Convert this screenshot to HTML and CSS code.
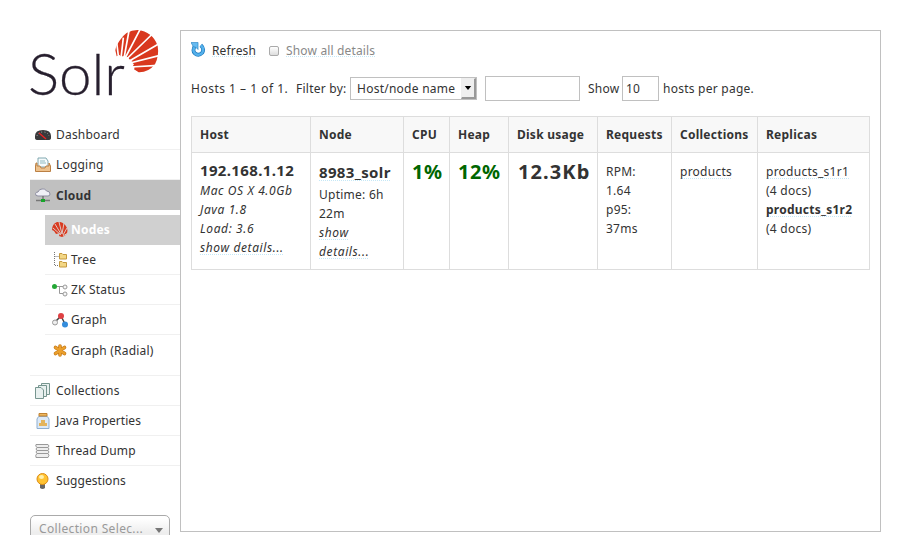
FILE: index.html
```
<!DOCTYPE html>
<html lang="en">
<head>
<meta charset="utf-8">
<title>Solr Admin</title>
<link rel="stylesheet" href="styles.css">
</head>
<body>
<div class="page">
<aside class="sidebar">
<svg class="logo" width="130" height="90" viewBox="0 0 130 90">
<g transform="translate(80 -5) scale(.3333)">
<path fill="#d9381e" d="M20 94 16 76Q17 62 28 48Q48 15 82 15Q128 20 143 62Q148 92 135 118Q115 143 86 142L72 133 74 128 69 122 72 118 64 111 68 107 58 103 54 96 44 97 40 92 34 96 29 90Z"/>
<path stroke="#fff" stroke-width="5" d="M26 100 20 52M33 100 40 38M42 100 58 12M44 102 90 14M50 102 124 30M58 108 147 56M60 114 147 92M62 126 144 121"/>
</g>
<text class="logo-text" x="-2" y="65" textLength="97" lengthAdjust="spacingAndGlyphs">Solr</text>
</svg>
<nav class="menu">
<a class="item"><svg class="icon" viewBox="0 0 16 16"><path d="M0 9Q0 3 8 3T16 9V11Q16 13 13 13H3Q0 13 0 11Z" fill="#39393b"/><path d="M2 9Q3 5 8 5T14 9" fill="none" stroke="#aaa" stroke-dasharray="1 2"/><path d="M4 6 11 12" stroke="#e22" stroke-width="1.300"/></svg><span>Dashboard</span></a>
<a class="item"><svg class="icon" viewBox="0 0 16 16"><path d="M3 1H11L13 4V10H3Z" fill="#f6fbfc" stroke="#80a8b0"/><path d="M5 4H10M5 6H11" stroke="#8fbac0"/><path d="M1 6 0.500 9V14.500H15.500V9L14 6V9H11L10 11H6L5 9H2V6Z" fill="#eec28d" stroke="#bb8044"/></svg><span>Logging</span></a>
<a class="item active"><svg class="icon" viewBox="0 0 16 16"><path d="M3 9Q0 9 .6 6.500 1 5 3 5 4 2 7 2 10 1 11.500 4 15 4 15 7 15 9 13 9Z" fill="#f0f0f6" stroke="#8d8da0"/><path d="M8 9V12M1 13.500H15" stroke="#777" stroke-width="1.500"/><path d="M6 12H10V15H6Z" fill="#16a52a"/></svg><span>Cloud</span></a>
<div class="submenu">
<a class="item current"><svg class="icon" viewBox="0 0 16 16"><path d="M0 8Q0 2 5 0 12-1 15 6 17 13 10 15L7 14 8 11 4 12 2 9Z" fill="#d93b20"/><path d="M9 13 1 6M9 12 3 2M10 12 7 0M10 12 12 1M11 13 15 6M11 14 16 11" stroke="#dcc8c4"/></svg><span>Nodes</span></a>
<a class="item"><svg class="icon" viewBox="0 0 16 16"><path d="M2.500 0V13.500H7M2.500 4.500H7" fill="none" stroke="#777" stroke-dasharray="1 1"/><path d="M7.500 1.500H10L11 2.500H14.500V7H7.500ZM7.500 9.500H10L11 10.500H14.500V15H7.500Z" fill="#f3d785" stroke="#c59a40"/></svg><span>Tree</span></a>
<a class="item"><svg class="icon" viewBox="0 0 16 16"><path d="M5 4.500H11M7.500 4.500V11.500H11" fill="none" stroke="#999"/><circle cx="2.500" cy="4.500" r="2.500" fill="#23a735"/><circle cx="13" cy="5" r="2" fill="#f6f6f6" stroke="#999"/><circle cx="13" cy="12" r="2" fill="#f6f6f6" stroke="#999"/></svg><span>ZK Status</span></a>
<a class="item"><svg class="icon" viewBox="0 0 16 16"><path d="M3 10 9 4 13 12" fill="none" stroke="#444" stroke-width="1.500"/><circle cx="9" cy="4" r="3" fill="#df4144"/><circle cx="3" cy="10.500" r="2.500" fill="#eee" stroke="#999"/><circle cx="13" cy="12.500" r="3" fill="#348ddc"/></svg><span>Graph</span></a>
<a class="item"><svg class="icon" viewBox="0 0 16 16"><path d="M8 3V12M3.500 4.500 12.500 10.500M12.500 4.500 3.500 10.500" stroke="#c67a1a" stroke-width="3.600" stroke-linecap="round"/><path d="M8 3V12M3.500 4.500 12.500 10.500M12.500 4.500 3.500 10.500" stroke="#eba02d" stroke-width="2.200" stroke-linecap="round"/></svg><span>Graph (Radial)</span></a>
</div>
<a class="item"><svg class="icon" viewBox="0 0 16 16"><g fill="#e8f0ef" stroke="#76958f"><path d="M6.500.5H14.500V11.500H6.500Z"/><path d="M3.500 2.500H11.500V13.500H3.500Z"/><path d="M.5 4.500H6L8.500 7V15.500H.5Z"/></g></svg><span>Collections</span></a>
<a class="item"><svg class="icon" viewBox="0 0 16 16"><path d="M3.500 3.500H12.500L14 6V15.500H2V6Z" fill="#dce9f7" stroke="#8eafd0"/><path d="M4 .5H12V3H4Z" fill="#ecb65d" stroke="#c08232"/><path d="M4 13V10H6V7H10V10H12V13Z" fill="#e3b45c"/></svg><span class="tight">Java Properties</span></a>
<a class="item"><svg class="icon" viewBox="0 0 16 16"><path d="M1 1.500H13Q15 3 13 4.500H2Q0 3 1 1.500M2 4.500H13Q15 6 13 7.500H2Q0 6 2 4.500M2 7.500H13Q15 9 13 10.500H2Q0 9 2 7.500M2 10.500H13Q15 12 13 14.500H1Q0 12 2 10.500" fill="#eee" stroke="#999"/></svg><span>Thread Dump</span></a>
<a class="item last"><svg class="icon" viewBox="0 0 16 16"><path d="M5 10H10V15Q7.500 17 5 15Z" fill="#666"/><circle cx="7.500" cy="6" r="5.500" fill="#ffc332" stroke="#dc8c16"/><ellipse cx="6.500" cy="4" rx="2.500" ry="2" fill="#fff0ae"/></svg><span class="tight">Suggestions</span></a>
</nav>
<div class="selector"><span>Collection Selec...</span><i class="caret"></i></div>
</aside>
<main class="content">
<div class="toolbar">
<svg class="refresh" viewBox="0 0 16 16"><path d="M4.500 3.500Q1 9 4 12 8 15.500 12 11.500 14.500 7 10.500 3.500" fill="none" stroke="#1c76b9" stroke-width="4"/><path d="M4.500 3.500Q1 9 4 12 8 15.500 12 11.500 14.500 7 10.500 3.500" fill="none" stroke="#54b1ec" stroke-width="2.600"/><path d="M0 .5H7.500V8L5 5.500 2.500 5Z" fill="#66baf0" stroke="#2a87c7" stroke-width=".7"/></svg>
<a class="link">Refresh</a>
<i class="checkbox"></i>
<a class="link muted">Show all details</a>
</div>
<div class="filters">
<span class="f-hosts">Hosts 1 – 1 of 1.</span><span class="f-by">Filter by:</span>
<div class="select"><span>Host/node name</span><i class="drop"></i></div>
<div class="input wide"></div>
<span class="f-show">Show</span><div class="input small">10</div><span>hosts per page.</span>
</div>
<table class="nodes">
<colgroup><col class="c1"><col class="c2"><col class="c3"><col class="c4"><col class="c5"><col class="c6"><col class="c7"><col class="c8"></colgroup>
<thead><tr><th>Host</th><th>Node</th><th>CPU</th><th>Heap</th><th>Disk usage</th><th>Requests</th><th>Collections</th><th>Replicas</th></tr></thead>
<tbody><tr>
<td><div class="name">192.168.1.12</div><div class="italic">Mac OS X 4.0Gb<br>Java 1.8<br>Load: 3.6<br><a class="link">show details...</a></div></td>
<td><div class="name node"><a class="link">8983_solr</a></div>Uptime: 6h<br>22m<div class="italic"><a class="link">show<br>details...</a></div></td>
<td><div class="big green">1%</div></td>
<td><div class="big green">12%</div></td>
<td><div class="big disk">12.3Kb</div></td>
<td>RPM:<br>1.64<br>p95:<br>37ms</td>
<td><a class="link">products</a></td>
<td><a class="link">products_s1r1</a><br>(4 docs)<br><a class="link strong">products_s1r2</a><br>(4 docs)</td>
</tr></tbody>
</table>
</main>
</div>
</body>
</html>
```
FILE: styles.css
```
* { box-sizing: border-box; }
html { overflow: hidden; }
body { margin: 0; height: 535px; overflow: hidden; background: #fff; color: #333; font: 12px/19px "Noto Sans", "Liberation Sans", sans-serif; letter-spacing: .25px; }
.page { display: flex; padding: 30px 0 0 30px; }
.sidebar { width: 150px; height: 505px; flex: none; }
.logo { display: block; overflow: visible; }
.logo-text { font-family: Lato, sans-serif; font-weight: 300; font-size: 58px; letter-spacing: 0; fill: #271f2e; stroke: #271f2e; stroke-width: .3; }
.item { display: flex; align-items: center; height: 30px; padding-left: 5px; border-bottom: 1px solid #f0f0f0; white-space: nowrap; letter-spacing: .2px; }
.tight { letter-spacing: .05px; }
.icon { width: 16px; height: 16px; margin-right: 5px; flex: none; }
.item.active { background: #c0c0c0; border-color: #c0c0c0; font-weight: bold; padding-top: 1px; }
.submenu { margin-left: 15px; padding: 5px 0 9px; }
.submenu .item { padding-left: 7px; }
.submenu .icon { margin-right: 3px; }
.submenu .item:last-child { height: 31px; border: 0; }
.submenu .current { background: #d0d0d0; border-color: #d0d0d0; color: #fff; font-weight: bold; }
.submenu + .item { border-top: 1px solid #f0f0f0; height: 31px; }
.item.last { border: 0; height: 29px; }
.selector { display: flex; justify-content: space-between; align-items: center; width: 140px; height: 27px; margin-top: 20px; padding: 0 6px 0 8px; border: 1px solid #aaa; border-radius: 5px; color: #999; background: linear-gradient(#fff 10%, #eee 65%); letter-spacing: .35px; }
.caret { margin-top: 4px; border: 4px solid transparent; border-top: 5px solid #777; border-bottom: 0; }
.content { width: 701px; height: 502px; border: 1px solid #c0c0c0; padding: 10px; }
.toolbar { display: flex; align-items: center; height: 19px; letter-spacing: .15px; }
.refresh { width: 15px; height: 15px; margin: -3px 6px 0 0; }
.link { color: inherit; background: repeating-linear-gradient(90deg, #c5e8f7 0 1px, transparent 1px 2px) 0 15px / 100% 1px no-repeat; }
.checkbox { width: 10px; height: 10px; margin: 1px 7px 0 13px; border: 1px solid #aaa; border-radius: 2px; background: linear-gradient(#fff, #ddd); }
.muted { color: #888; }
.filters { display: flex; align-items: center; height: 25px; margin-top: 16px; white-space: nowrap; }
.f-hosts { width: 105px; letter-spacing: .5px; }
.f-by { width: 54px; }
.select { display: flex; align-items: center; justify-content: space-between; width: 127px; height: 23px; border: 1px solid #c0c0c0; padding-left: 6px; margin-right: 8px; }
.drop { display: flex; align-items: center; justify-content: center; width: 15px; height: 21px; border: solid; border-width: 1px 2px 2px 1px; border-color: #eee #999 #999 #eee; background: #efefef; }
.drop::after { content: ""; border: 4px solid transparent; border-top-color: #000; border-bottom: 0; transform: scaleX(.8); }
.input { height: 25px; border: 1px solid #c0c0c0; padding: 2px 3px; }
.wide { width: 95px; margin-right: 8px; }
.f-show { width: 34px; }
.small { width: 37px; margin-right: 4px; }
.nodes { width: 679px; margin-top: 15px; table-layout: fixed; border-collapse: collapse; }
.c1 { width: 119px; } .c2 { width: 93px; } .c3 { width: 46px; } .c4 { width: 59px; } .c5 { width: 89px; } .c6 { width: 74px; } .c7 { width: 86px; } .c8 { width: 112px; }
th, td { border: 1px solid #ddd; padding: 8px; text-align: left; vertical-align: top; white-space: nowrap; }
th { height: 36px; background: #f8f8f8; }
td { height: 117px; padding-top: 9px; }
.name { height: 19px; font-size: 15px; line-height: 17px; font-weight: bold; letter-spacing: .35px; }
.name.node { height: 23px; line-height: 19px; padding-top: 1px; }
.node .link { background-position-y: 18px; }
.italic { font-style: italic; letter-spacing: .6px; }
.strong { font-weight: bold; }
.big { font-size: 20px; font-weight: bold; letter-spacing: .5px; }
.disk { letter-spacing: 1.1px; padding-left: 1px; }
.green { color: #060; }
```
